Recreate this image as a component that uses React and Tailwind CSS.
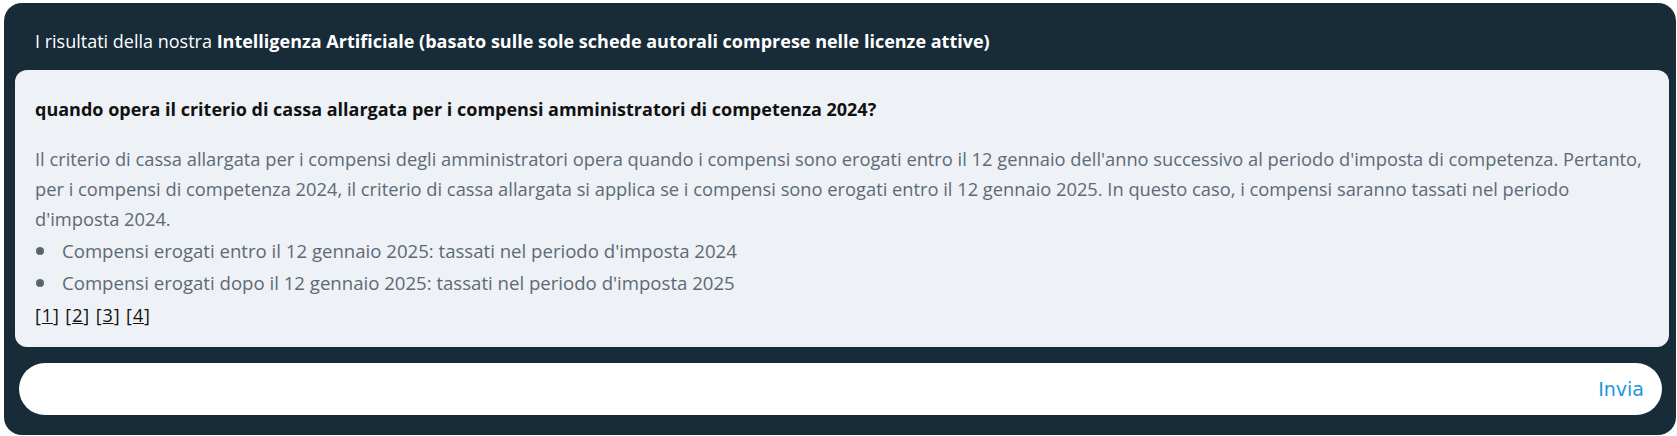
import React, { useState } from "react";

const font = { fontFamily: "'Open Sans', Lato, sans-serif" };

const bullets = [
  "Compensi erogati entro il 12 gennaio 2025: tassati nel periodo d'imposta 2024",
  "Compensi erogati dopo il 12 gennaio 2025: tassati nel periodo d'imposta 2025",
];

const App = () => {
  const [message, setMessage] = useState("");

  return (
    <div className="pt-[3px] pl-[4px] pr-[1px]" style={font}>
      <div className="bg-[#172b38] rounded-[18px] h-[432px] flex flex-col">
        {/* Header */}
        <div className="pt-[26px] pb-[17px] pl-[31px] text-[18px] leading-[24px] text-white">
          I risultati della nostra{" "}
          <span className="font-bold">
            Intelligenza Artificiale (basato sulle sole schede autorali comprese nelle licenze attive)
          </span>
        </div>

        {/* Answer card */}
        <div className="ml-[11px] mr-[7px] h-[277px] bg-[#eef1f6] rounded-[12px] pl-[20px] pr-[10px] pt-[27px]">
          <h3 className="text-[18px] leading-[24px] font-bold text-[#111111]">
            quando opera il criterio di cassa allargata per i compensi amministratori di competenza 2024?
          </h3>
          <p className="mt-[23px] text-[18.3px] leading-[30px] text-[#5d6a75]">
            Il criterio di cassa allargata per i compensi degli amministratori opera quando i compensi sono erogati
            entro il 12 gennaio dell'anno successivo al periodo d'imposta di competenza. Pertanto, per i compensi di
            competenza 2024, il criterio di cassa allargata si applica se i compensi sono erogati entro il 12 gennaio
            2025. In questo caso, i compensi saranno tassati nel periodo
            <br />
            d'imposta 2024.
          </p>
          <ul className="mt-[1px]">
            {bullets.map((b) => (
              <li key={b} className="flex items-center text-[18.6px] leading-[32px] text-[#5d6a75]">
                <span className="w-[8px] h-[8px] rounded-full bg-[#5c6670] ml-[1px] mr-[18px]"></span>
                {b}
              </li>
            ))}
          </ul>
          <div className="text-[18px] leading-[30px] tracking-[0.9px] text-[#111111] mt-[1px]">
            [<span className="underline">1</span>] [<span className="underline">2</span>] [
            <span className="underline">3</span>] [<span className="underline">4</span>]
          </div>
        </div>

        {/* Input */}
        <div className="mt-[16px] ml-[15px] mr-[14px] h-[52px] bg-white rounded-full flex items-center pl-[24px] pr-[18px]">
          <input
            type="text"
            value={message}
            onChange={(e) => setMessage(e.target.value)}
            className="flex-1 bg-transparent outline-none text-[18px] text-[#333]"
          />
          <button
            type="button"
            className="text-[19px] text-[#1d97d8]"
            style={{ fontFamily: "'DejaVu Sans', sans-serif" }}
          >
            Invia
          </button>
        </div>
      </div>
    </div>
  );
};

export default App;
